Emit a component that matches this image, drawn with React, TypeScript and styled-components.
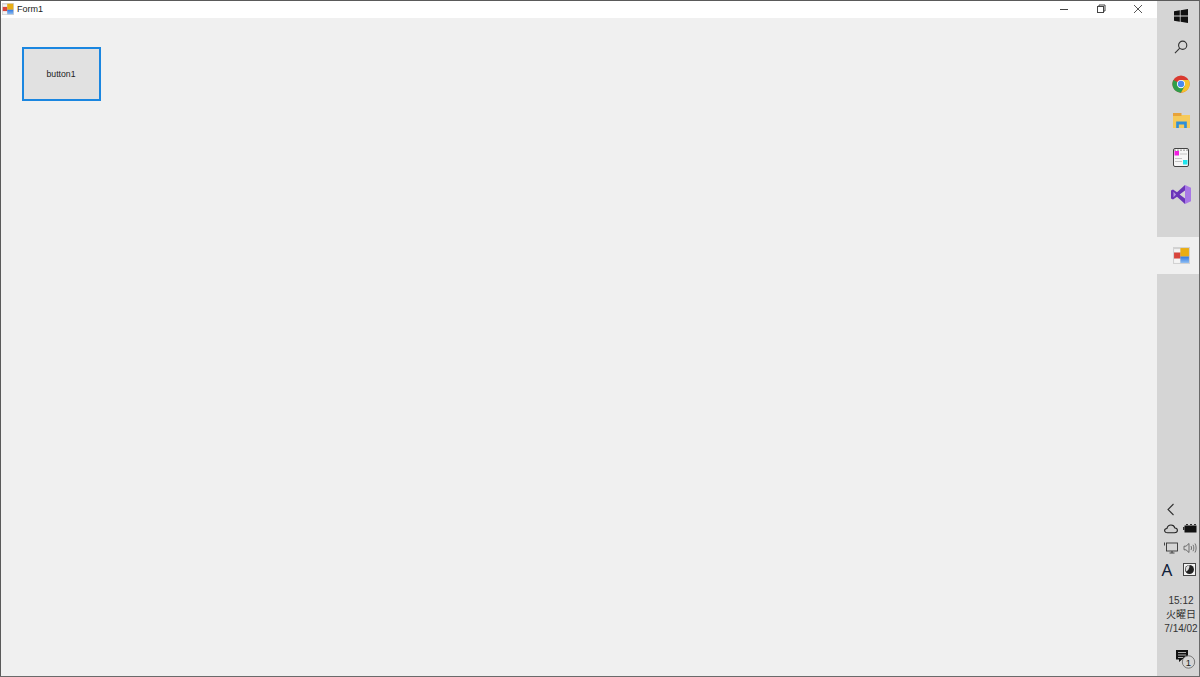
import React from 'react';
import styled, { createGlobalStyle } from 'styled-components';

const GlobalStyle = createGlobalStyle`
  html, body {
    margin: 0;
    padding: 0;
    width: 1200px;
    height: 677px;
    overflow: hidden;
    background: #f0f0f0;
    font-family: "Liberation Sans", Arial, sans-serif;
  }
`;

const Desktop = styled.div`
  display: flex;
  width: 1200px;
  height: 677px;
  box-sizing: border-box;
  border-top: 1px solid #5a5a5a;
  border-bottom: 1px solid #6a6a6a;
  border-right: 1px solid #6a6a6a;
`;

const Window = styled.div`
  flex: 1;
  display: flex;
  flex-direction: column;
  background: #f0f0f0;
  border-left: 1px solid #5a5a5a;
`;

const TitleBar = styled.div`
  height: 17px;
  box-sizing: border-box;
  background: #fff;
  display: flex;
  align-items: center;
  padding: 0 1px 1px 1px;
`;

const Title = styled.span`
  font-size: 9px;
  color: #222;
  margin-left: 3px;
  flex: 1;
`;

const Caption = styled.div`
  width: 37px;
  height: 16px;
  display: flex;
  align-items: center;
  justify-content: center;
`;

const Client = styled.div`
  flex: 1;
  padding: 29px 0 0 21px;
`;

const FormButton = styled.button`
  display: block;
  width: 79px;
  height: 54px;
  box-sizing: border-box;
  padding: 0 1px 0 0;
  border: 2px solid #1a86e0;
  background: #e1e1e1;
  color: #222;
  font-family: "Liberation Sans", Arial, sans-serif;
  font-size: 8.7px;
`;

const Taskbar = styled.div`
  width: 42px;
  display: flex;
  flex-direction: column;
  background: #d5d5d5;
`;

const Launcher = styled.div<{ $active?: boolean; $height?: number }>`
  height: ${(p) => p.$height ?? 37}px;
  flex: none;
  display: flex;
  align-items: center;
  justify-content: center;
  padding-left: 6px;
  background: ${(p) => (p.$active ? '#f0f0f0' : 'transparent')};
`;

const Gap = styled.div<{ $height: number }>`
  height: ${(p) => p.$height}px;
  flex: none;
`;

const Tray = styled.div`
  margin-top: auto;
  display: flex;
  flex-direction: column;
  align-items: center;
`;

const TrayRow = styled.div`
  width: 38px;
  height: 19px;
  display: flex;
  align-items: center;
  justify-content: space-between;
  margin-left: 4px;
`;

const TraySlot = styled.div`
  width: 19px;
  display: flex;
  justify-content: center;
  align-items: center;
`;

const ImeRow = styled(TrayRow)`
  height: 25px;
`;

const ImeLetter = styled.span`
  font-family: "Noto Sans", sans-serif;
  font-size: 17px;
  color: #10203a;
  line-height: 1;
  margin-right: 7px;
`;

const Clock = styled.div`
  margin-top: 12px;
  margin-left: 6px;
  font-family: "Liberation Sans", "Noto Sans CJK JP", sans-serif;
  font-size: 10px;
  line-height: 14px;
  color: #333;
  text-align: center;
  white-space: nowrap;
`;

const Notice = styled.div`
  align-self: stretch;
  height: 33px;
  margin-top: 7px;
  padding-right: 2px;
  padding-bottom: 2px;
  box-sizing: border-box;
  display: flex;
  align-items: center;
  justify-content: flex-end;
`;

const FormIcon = ({ size }: { size: number }) => (
  <svg width={size} height={size} viewBox="0 0 16 16">
    <defs>
      <linearGradient id="formBlue" x1="0" y1="0" x2="0" y2="1">
        <stop offset="0" stopColor="#2f78e0" />
        <stop offset="1" stopColor="#8dbcf2" />
      </linearGradient>
    </defs>
    <rect width="16" height="16" fill="#d2d2d2" />
    <rect x="1" y="5" width="6" height="6" fill="#d8453c" />
    <rect x="1" y="2" width="6" height="3" fill="#f4f4f4" />
    <rect x="1" y="11" width="6" height="4" fill="#f4f4f4" />
    <rect x="7" y="1" width="8" height="8" fill="#e9ad12" />
    <rect x="7" y="9" width="8" height="6" fill="url(#formBlue)" />
  </svg>
);

export default function App() {
  return (
    <>
      <GlobalStyle />
      <Desktop>
        <Window>
          <TitleBar>
            <FormIcon size={12} />
            <Title>Form1</Title>
            <Caption>
              <svg width="10" height="10" viewBox="0 0 10 10">
                <path d="M1 5.5h8" stroke="#444" strokeWidth="1" />
              </svg>
            </Caption>
            <Caption>
              <svg width="10" height="10" viewBox="0 0 10 10" fill="none" stroke="#444">
                <rect x="1.5" y="2.5" width="6" height="6" />
                <path d="M3 2.5V1h6v6H7.5" />
              </svg>
            </Caption>
            <Caption>
              <svg width="10" height="10" viewBox="0 0 10 10" stroke="#444" strokeWidth="0.9">
                <path d="M1 1l8 8M9 1l-8 8" />
              </svg>
            </Caption>
          </TitleBar>
          <Client>
            <FormButton>button1</FormButton>
          </Client>
        </Window>
        <Taskbar>
          <Launcher $height={30}>
            <svg width="14" height="14" viewBox="0 0 14 14" fill="#111">
              <path d="M0 2.2l5.8-.9v5.3H0zM6.6 1.2L14 0v6.6H6.6zM0 7.4h5.8v5.3L0 11.8zM6.6 7.4H14V14l-7.4-1.2z" />
            </svg>
          </Launcher>
          <Launcher $height={31}>
            <svg width="14" height="14" viewBox="0 0 15 15" fill="none" stroke="#333" strokeWidth="1.2">
              <circle cx="9.3" cy="5.6" r="4.4" />
              <path d="M6.2 8.8L1 14" />
            </svg>
          </Launcher>
          <Gap $height={3} />
          <Launcher>
            <svg width="18" height="18" viewBox="0 0 48 48">
              <circle cx="24" cy="24" r="23" fill="#d93a30" />
              <path d="M24 24L3.8 13A23 23 0 0 0 24 47l12-20z" fill="#2f9e4a" />
              <path d="M24 13h20.5A23 23 0 0 1 24 47l11-20z" fill="#f5c32c" />
              <circle cx="24" cy="24" r="11" fill="#fff" />
              <circle cx="24" cy="24" r="8.5" fill="#4a8af0" />
            </svg>
          </Launcher>
          <Launcher>
            <svg width="17" height="15" viewBox="0 0 16 15" preserveAspectRatio="none">
              <rect x="0" y="2" width="16" height="13" fill="#f6ca5a" />
              <rect x="0" y="0" width="8" height="3" fill="#e8a33a" />
              <path d="M3 15V8.5h10V15h-2.5v-3.5h-5V15z" fill="#2f8fd8" />
            </svg>
          </Launcher>
          <Launcher>
            <svg width="16" height="19" viewBox="0 0 16 19">
              <rect x="0.5" y="0.5" width="15" height="18" rx="1.5" fill="#f6f6f6" stroke="#444" />
              <path d="M2 1.5V3M5 1.5V3M8 1.5V3M11 1.5V3M14 1.5V3" stroke="#777" />
              <rect x="1.5" y="3" width="4.5" height="4.5" fill="#f01fe0" />
              <rect x="10" y="12" width="4.5" height="4.5" fill="#1fe6ee" />
              <path d="M2 10.5h7M2 13.5h7M7 6h7" stroke="#c4c4c4" />
            </svg>
          </Launcher>
          <Launcher>
            <svg width="20" height="19" viewBox="0 0 20 19">
              <path d="M14 0l6 2.8v13.4L14 19z" fill="#a878e6" />
              <path d="M14 0L6 7.2 2 4.500 0 5.600v7.800l2 1.100 4-2.700 8 7.200v-5.500L8.600 9.500 14 5.500z" fill="#6a35b8" />
              <path d="M2.500 6.800L5 9.500l-2.500 2.700z" fill="#b79ae2" />
            </svg>
          </Launcher>
          <Gap $height={24} />
          <Launcher $active>
            <FormIcon size={17} />
          </Launcher>
          <Tray>
            <TrayRow>
              <TraySlot>
                <svg width="10" height="13" viewBox="0 0 10 13" fill="none" stroke="#333" strokeWidth="1.1">
                  <path d="M7.5 1L2 6.5 7.5 12" />
                </svg>
              </TraySlot>
              <TraySlot />
            </TrayRow>
            <TrayRow>
              <TraySlot>
                <svg width="14" height="10" viewBox="0 0 14 10" fill="#cfcfcf" stroke="#222" strokeWidth="1.1">
                  <path d="M3.5 8.800C1.600 8.800.6 7.800.6 6.600c0-1.200 1-2 2.300-2.100C3.400 2.400 5 1 7 1c2 0 3.400 1.200 3.900 3 1.500.1 2.500 1 2.500 2.300 0 1.400-1.100 2.500-2.900 2.500z" />
                </svg>
              </TraySlot>
              <TraySlot>
                <svg width="14" height="9" viewBox="0 0 14 9">
                  <rect x="1.5" y="1.5" width="12" height="7" fill="#111" />
                  <rect x="0" y="3" width="1.5" height="3" fill="#333" />
                  <path d="M3 .5h2M7 .5h2M11 .5h2" stroke="#333" />
                </svg>
              </TraySlot>
            </TrayRow>
            <TrayRow>
              <TraySlot>
                <svg width="14" height="12" viewBox="0 0 14 12" fill="none" stroke="#333" strokeWidth="0.9">
                  <rect x="2.5" y="1" width="11" height="8" />
                  <path d="M.5 .5v3M5.5 11h5M8 9v2" />
                </svg>
              </TraySlot>
              <TraySlot>
                <svg width="14" height="12" viewBox="0 0 14 12" fill="none" stroke="#555" strokeWidth="0.8">
                  <path d="M1 4.2h2L6 1.5v9L3 7.800H1z" />
                  <path d="M8 4c.7 1.200.7 2.800 0 4M10 2.800c1.100 2 1.100 4.400 0 6.400M12 1.500c1.500 2.800 1.500 6.200 0 9" />
                </svg>
              </TraySlot>
            </TrayRow>
            <ImeRow>
              <TraySlot>
                <ImeLetter>A</ImeLetter>
              </TraySlot>
              <TraySlot>
                <svg width="13" height="13" viewBox="0 0 13 13">
                  <rect x="0.5" y="0.5" width="12" height="12" fill="#f2f2f2" stroke="#444" />
                  <circle cx="6.5" cy="6.5" r="4.5" fill="#222" />
                  <path d="M6.500 2A4.500 4.500 0 0 0 3 8.500C5 8 6.500 6 6.500 2z" fill="#ddd" />
                </svg>
              </TraySlot>
            </ImeRow>
            <Clock>
              15:12
              <br />
              火曜日
              <br />
              7/14/02
            </Clock>
            <Notice>
              <svg width="22" height="20" viewBox="0 0 22 20">
                <path d="M1 1h12v9.500H7L4 13v-2.500H1z" fill="#111" />
                <path d="M3 3.500h8M3 6h8M3 8.500h5" stroke="#d5d5d5" strokeWidth="0.8" />
                <circle cx="13.5" cy="13" r="6.2" fill="#d5d5d5" stroke="#777" />
                <text x="13.5" y="16.5" fontSize="9.5" textAnchor="middle" fontFamily="Liberation Sans, sans-serif" fill="#222">
                  1
                </text>
              </svg>
            </Notice>
          </Tray>
        </Taskbar>
      </Desktop>
    </>
  );
}
